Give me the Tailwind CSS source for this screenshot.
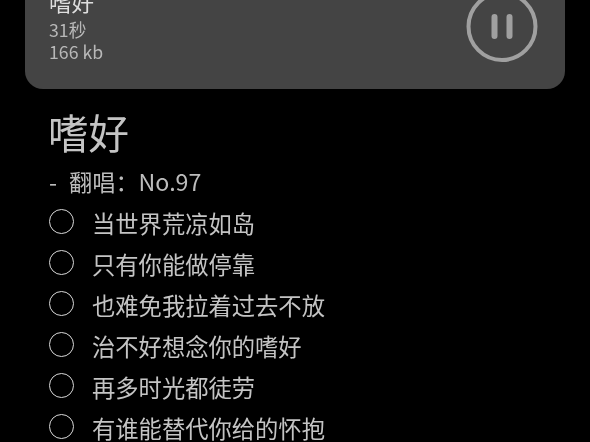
<!DOCTYPE html>
<html lang="zh-CN"><head><meta charset="utf-8">
<script src="https://cdn.jsdelivr.net/npm/@tailwindcss/browser@4"></script>
</head>
<body class="bg-black overflow-hidden">
<main class="w-[590px] h-[442px] overflow-hidden bg-black font-['Noto_Sans_CJK_SC','Noto_Sans',sans-serif] font-normal will-change-transform">
  <section class="mx-[25px] h-[89px] rounded-b-[18px] bg-[#444444] pl-[24px] pr-[27px] flex justify-between items-end overflow-hidden">
    <div class="pb-[27px] text-[#b8b8b8] text-[17.7px] leading-[22px]">
      <div class="text-[22.5px] leading-[22px] text-[#dedede] mb-[6px] -mt-[8px]">嗜好</div>
      <div>31秒</div>
      <div>166 kb</div>
    </div>
    <svg class="mb-[27px] w-[72px] h-[72px] shrink-0" viewBox="0 0 72 72" fill="none" stroke="#a0a0a0">
      <circle cx="36" cy="36.5" r="33.5" stroke-width="4"/>
      <path d="M28.5 27v19M43.5 27v19" stroke-width="6" stroke-linecap="round"/>
    </svg>
  </section>
  <h1 class="ml-[48px] mt-[16px] text-[40.5px] leading-[54px] text-[#c4c4c4]">嗜好</h1>
  <p class="ml-[49px] mt-[2px] h-[41px] text-[23.2px] leading-[41px] text-[#bcbcbc] whitespace-pre">-<span class="ml-[12px]">翻唱：No.97</span></p>
  <ul class="ml-[49px] text-[23.3px] leading-[41px] text-[#c4c4c4]">
    <li class="flex items-center gap-[18px] h-[41px]"><span class="w-[25px] h-[25px] rounded-full border-[1.5px] border-[#d8d8d8] shrink-0 -mt-[3px]"></span><span class="pt-[2px]">当世界荒凉如岛</span></li>
    <li class="flex items-center gap-[18px] h-[41px]"><span class="w-[25px] h-[25px] rounded-full border-[1.5px] border-[#d8d8d8] shrink-0 -mt-[3px]"></span><span class="pt-[2px]">只有你能做停靠</span></li>
    <li class="flex items-center gap-[18px] h-[41px]"><span class="w-[25px] h-[25px] rounded-full border-[1.5px] border-[#d8d8d8] shrink-0 -mt-[3px]"></span><span class="pt-[2px]">也难免我拉着过去不放</span></li>
    <li class="flex items-center gap-[18px] h-[41px]"><span class="w-[25px] h-[25px] rounded-full border-[1.5px] border-[#d8d8d8] shrink-0 -mt-[3px]"></span><span class="pt-[2px]">治不好想念你的嗜好</span></li>
    <li class="flex items-center gap-[18px] h-[41px]"><span class="w-[25px] h-[25px] rounded-full border-[1.5px] border-[#d8d8d8] shrink-0 -mt-[3px]"></span><span class="pt-[2px]">再多时光都徒劳</span></li>
    <li class="flex items-center gap-[18px] h-[41px]"><span class="w-[25px] h-[25px] rounded-full border-[1.5px] border-[#d8d8d8] shrink-0 -mt-[3px]"></span><span class="pt-[2px]">有谁能替代你给的怀抱</span></li>
  </ul>
</main>
</body></html>
